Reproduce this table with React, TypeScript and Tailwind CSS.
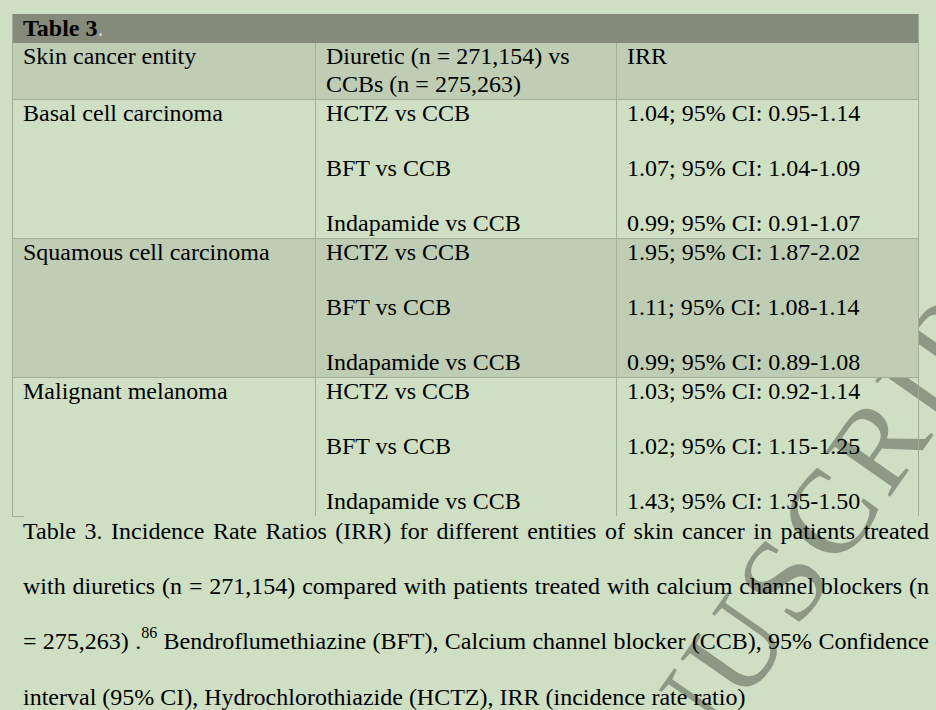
import React from "react";

const serif = "font-['Liberation_Serif','Times_New_Roman',serif]";

function Lines({ lines }: { lines: string[] }) {
  return (
    <>
      {lines.map((l, i) => (
        <div key={i} className="h-[27.6px] whitespace-nowrap">
          {l}
        </div>
      ))}
    </>
  );
}

function Row({
  bg,
  c1,
  c2,
  c3,
  top,
  h,
}: {
  bg: string;
  c1: string[];
  c2: string[];
  c3: string[];
  top?: boolean;
  h: string;
}) {
  return (
    <div
      className={`grid grid-cols-[302px_301px_302px] ${h} ${bg} ${
        top ? "" : "border-t border-[#a3b098]"
      }`}
    >
      <div className="pl-[10px]">
        <Lines lines={c1} />
      </div>
      <div className="border-l border-[#a3b098] pl-[10px]">
        <Lines lines={c2} />
      </div>
      <div className="border-l border-[#a3b098] pl-[10px]">
        <Lines lines={c3} />
      </div>
    </div>
  );
}

export default function App() {
  return (
    <div
      className={`relative h-[710px] w-[936px] overflow-hidden bg-[#cedfc4] pt-[14px] text-[24px] leading-[27.6px] text-black ${serif}`}
    >
      {/* Watermark (behind content) */}
      <div
        className={`pointer-events-none absolute left-[136px] top-[1444px] origin-left -rotate-[55deg] whitespace-nowrap text-[120px] leading-none tracking-[0.05em] text-[#8d9985] ${serif}`}
      >
        ACCEPTED MANUSCRIPT
      </div>

      {/* Table */}
      <div className="relative ml-[12px] w-[907px] border-x border-[#a0ad95]">
        <div className="h-[29px] bg-[#858a7b] pl-[10px] pt-[1px] font-bold">
          Table 3<span className="font-normal text-[#d3e0ca]">.</span>
        </div>
        <Row
          top
          h="h-[56px]"
          bg="bg-[#bfcdb4]"
          c1={["Skin cancer entity"]}
          c2={["Diuretic (n = 271,154) vs", "CCBs (n = 275,263)"]}
          c3={["IRR"]}
        />
        <Row
          h="h-[139px]"
          bg="bg-[#cedfc4]"
          c1={["Basal cell carcinoma"]}
          c2={["HCTZ vs CCB", "", "BFT vs CCB", "", "Indapamide vs CCB"]}
          c3={[
            "1.04; 95% CI: 0.95-1.14",
            "",
            "1.07; 95% CI: 1.04-1.09",
            "",
            "0.99; 95% CI: 0.91-1.07",
          ]}
        />
        <Row
          h="h-[139px]"
          bg="bg-[#bfcdb4]"
          c1={["Squamous cell carcinoma"]}
          c2={["HCTZ vs CCB", "", "BFT vs CCB", "", "Indapamide vs CCB"]}
          c3={[
            "1.95; 95% CI: 1.87-2.02",
            "",
            "1.11; 95% CI: 1.08-1.14",
            "",
            "0.99; 95% CI: 0.89-1.08",
          ]}
        />
        <Row
          h="h-[139px]"
          bg=""
          c1={["Malignant melanoma"]}
          c2={["HCTZ vs CCB", "", "BFT vs CCB", "", "Indapamide vs CCB"]}
          c3={[
            "1.03; 95% CI: 0.92-1.14",
            "",
            "1.02; 95% CI: 1.15-1.25",
            "",
            "1.43; 95% CI: 1.35-1.50",
          ]}
        />
        <div className="absolute bottom-[-1px] left-[-1px] h-px w-[12px] bg-[#a0ad95]" />
      </div>

      {/* Caption */}
      <div className="relative -mt-[12px] ml-[23px] w-[906px] leading-[55.2px]">
        <div className="whitespace-nowrap text-justify [text-align-last:justify]">
          Table 3. Incidence Rate Ratios (IRR) for different entities of skin cancer in patients treated
        </div>
        <div className="whitespace-nowrap text-justify [text-align-last:justify]">
          with diuretics (n = 271,154) compared with patients treated with calcium channel blockers (n
        </div>
        <div className="whitespace-nowrap text-justify [text-align-last:justify]">
          = 275,263) .<span className="text-[16px] leading-none [vertical-align:11px]">86</span> Bendroflumethiazine (BFT), Calcium channel blocker (CCB), 95% Confidence
        </div>
        <div className="whitespace-nowrap">
          interval (95% CI), Hydrochlorothiazide (HCTZ), IRR (incidence rate ratio)
        </div>
      </div>
    </div>
  );
}
